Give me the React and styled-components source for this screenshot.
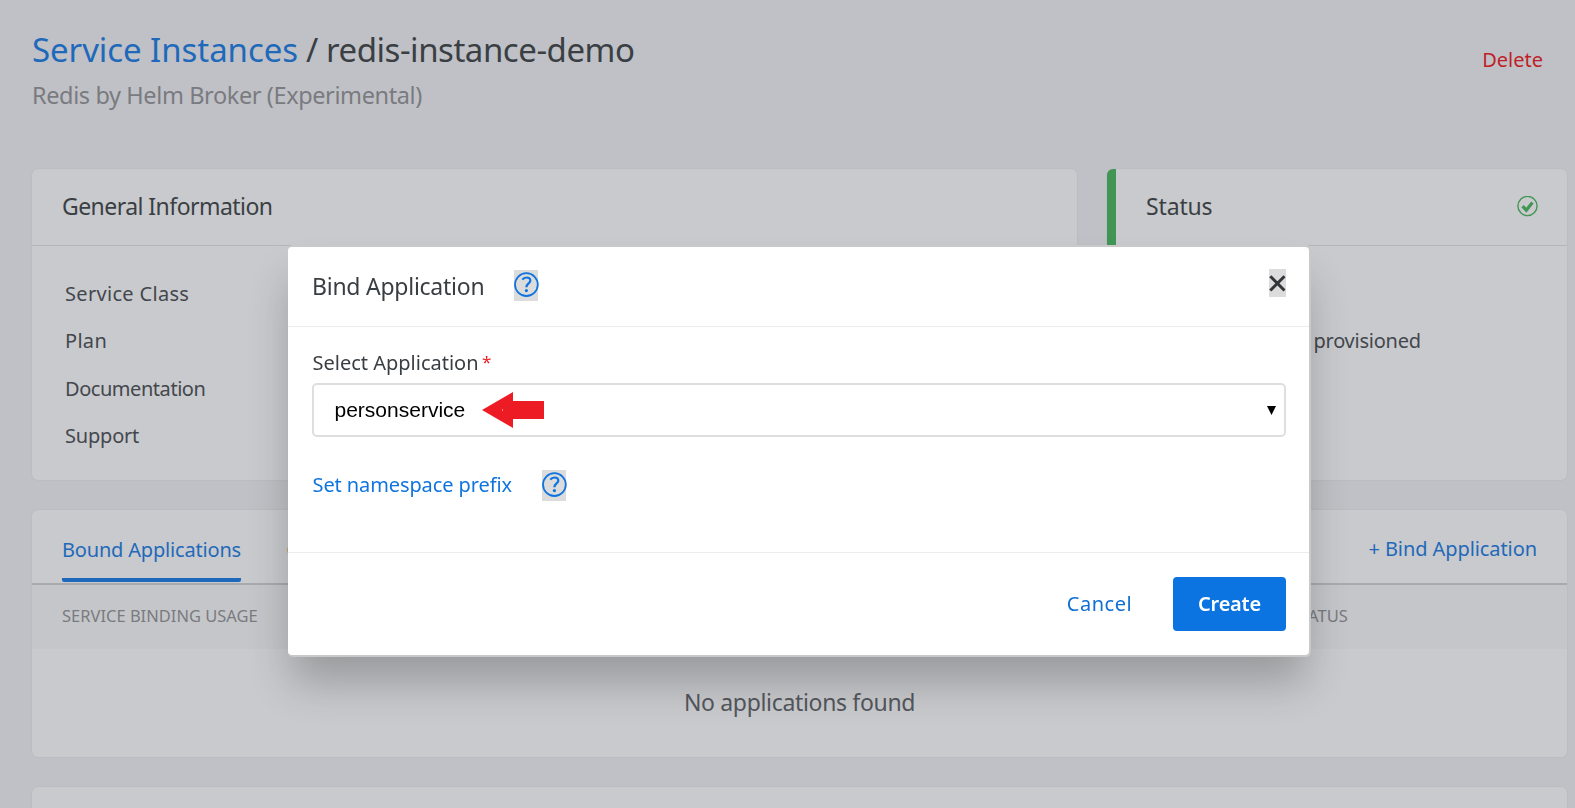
import React from 'react';
import styled, { createGlobalStyle } from 'styled-components';

const GlobalStyle = createGlobalStyle`
  * { box-sizing: border-box; }
  body {
    margin: 0;
    background: #c0c1c6;
    font-family: "Noto Sans", "Open Sans", sans-serif;
    color: #43474d;
  }
`;

const Page = styled.main`
  height: 808px;
  overflow: hidden;
  padding: 0 8px 0 32px;
`;

const Text = styled.span`
  letter-spacing: ${(p) => p.$spacing || 0}px;
  white-space: nowrap;
`;

const PageHeader = styled.header`
  display: flex;
  justify-content: space-between;
  align-items: flex-start;
  height: 169px;
  padding: 28px 24px 0 0;
`;

const Breadcrumb = styled.h1`
  margin: 0;
  font-size: 33px;
  line-height: 44px;
  font-weight: 400;
  color: #3a3f44;
  white-space: pre;
`;

const Crumb = styled.a`
  color: #1f69ba;
  letter-spacing: -0.07px;
`;

const Subtitle = styled.p`
  margin: 6px 0 0;
  font-size: 23.5px;
  line-height: 34px;
  color: #797b80;
`;

const DeleteButton = styled.button`
  margin-top: 18px;
  padding: 0;
  border: 0;
  background: none;
  font: 20px/28px "Noto Sans", sans-serif;
  color: #bf1f26;
`;

const TopGrid = styled.div`
  display: grid;
  grid-template-columns: 1045px 460px;
  gap: 30px;
  margin-bottom: 30px;
`;

const Card = styled.section`
  height: ${(p) => p.$height}px;
  margin-bottom: ${(p) => p.$gap || 0}px;
  border-radius: 6px;
  border-left: ${(p) => (p.$accent ? '9px solid #419656' : '0')};
  background: #c9cacd;
  box-shadow: 0 0 2px rgba(0, 0, 0, 0.08);
`;

const CardHeader = styled.div`
  display: flex;
  align-items: center;
  justify-content: space-between;
  height: 77px;
  padding: 0 29px 2px 30px;
  border-bottom: 1px solid #b5b6ba;
  font-size: 23px;
  line-height: 30px;
  color: #3a3f44;
`;

const CardBody = styled.div`
  display: flex;
  flex-direction: column;
  padding: ${(p) => p.$pad};
`;

const InfoRow = styled.div`
  font-size: 20px;
  line-height: 47.5px;
`;

const TabBar = styled.div`
  display: flex;
  align-items: flex-start;
  height: 75px;
  padding: 0 30px;
  border-bottom: 2px solid #a9aaae;
`;

const Tab = styled.div`
  height: 72px;
  margin-right: 45.5px;
  padding-top: 26px;
  font-size: 20px;
  line-height: 28px;
  color: ${(p) => (p.$active ? '#1f69ba' : '#43474d')};
  background: ${(p) => (p.$active ? 'linear-gradient(#1f69ba, #1f69ba) bottom / 100% 4px no-repeat' : 'none')};
  border-radius: 2px;
`;

const BindButton = styled.button`
  margin: 25px 0 0 auto;
  padding: 0;
  border: 0;
  background: none;
  font: 20px/28px "Noto Sans", sans-serif;
  letter-spacing: -0.08px;
  color: #1f69ba;
`;

const TableHead = styled.div`
  display: grid;
  grid-template-columns: 1229px 1fr;
  align-items: center;
  height: 64px;
  padding: 0 30px 3px;
  background: #c5c6c9;
  font-size: 16.5px;
  line-height: 24px;
  color: #797b80;
`;

const Empty = styled.div`
  padding-top: 38px;
  text-align: center;
  font-size: 23px;
  line-height: 30px;
  color: #53575d;
`;

const Overlay = styled.div`
  position: fixed;
  inset: 0;
  display: flex;
  align-items: flex-start;
  padding: 247px 0 0 288px;
`;

const Dialog = styled.div`
  width: 1021px;
  height: 408px;
  border-radius: 4px;
  background: #fff;
  color: #393e43;
  box-shadow: 1px -1px 0 1px #c8c9c9, 1px 1px 0 1px #c8c9c9, 0 30px 43px -3px rgba(0, 0, 0, 0.24);
`;

const DialogHeader = styled.div`
  display: flex;
  align-items: flex-start;
  height: 80px;
  padding: 22px 23px 0 24px;
  border-bottom: 1px solid #ececec;
`;

const DialogTitle = styled.h2`
  width: 202px;
  margin: 2px 0 0;
  font-size: 23px;
  line-height: 30px;
  font-weight: 400;
`;

const HelpBadge = styled.span`
  display: flex;
  width: 24px;
  height: 31px;
  margin-top: ${(p) => p.$top || 0}px;
  background: #dcdcdc;
  svg { flex: none; overflow: visible; }
`;

const CloseButton = styled.button`
  display: flex;
  width: 17px;
  height: 28px;
  margin-left: auto;
  padding: 0;
  border: 0;
  background: #dcdcdc;
`;

const DialogBody = styled.div`
  height: 226px;
  padding: 22px 23px 0 24px;
  border-bottom: 1px solid #ececec;
  font-size: 20px;
  line-height: 28px;
`;

const Label = styled.label`
  display: flex;
  gap: 3.5px;
  padding-left: 0.5px;
`;

const Required = styled.span`
  color: #ee1c25;
  font-size: 17px;
  line-height: 26px;
`;

const SelectBox = styled.div`
  display: flex;
  align-items: center;
  height: 54px;
  margin-top: 6px;
  padding: 0 8px 0 20.5px;
  border: 2px solid #dedede;
  border-radius: 5px;
  font: 21px/28px "Liberation Sans", sans-serif;
  color: #000;
`;

const ArrowMark = styled.svg`
  margin: 0 0 1px 16.5px;
`;

const Caret = styled.svg`
  margin-left: auto;
`;

const PrefixRow = styled.div`
  display: flex;
  margin-top: 33px;
`;

const PrefixLink = styled.a`
  width: 229.5px;
  padding: 1px 0 0 0.5px;
  color: #0f74df;
`;

const DialogFooter = styled.div`
  display: flex;
  justify-content: flex-end;
  align-items: center;
  height: 102px;
  padding: 0 23px;
`;

const DialogButton = styled.button`
  height: 54px;
  width: ${(p) => p.$width}px;
  padding: 0 0 1px;
  border: 0;
  border-radius: 4px;
  background: ${(p) => (p.$primary ? '#0b74e0' : 'none')};
  color: ${(p) => (p.$primary ? '#fff' : '#0f6fd4')};
  font: ${(p) => (p.$primary ? 600 : 400)} 20px/28px "Noto Sans", sans-serif;
`;

const HelpIcon = () => (
  <svg width="25" height="31" viewBox="0 0 25 31" fill="none" stroke="#0f74df">
    <circle cx="12.4" cy="14.6" r="11.4" strokeWidth="1.8" />
    <path d="M8.3 9.6C9.4 8.2 10.8 7.5 12.4 7.5C14.8 7.5 16.3 8.8 16.3 10.7C16.3 13.4 12.4 13.6 12.4 17.2" strokeWidth="2.2" />
    <circle cx="12.4" cy="20.6" r="1.6" fill="#0f74df" stroke="none" />
  </svg>
);

const CheckIcon = () => (
  <svg width="21" height="21" viewBox="0 0 21 21" fill="none">
    <circle cx="10.5" cy="10" r="9.6" stroke="#419656" strokeWidth="1.4" />
    <path d="M5.6 10.2L9.3 14.2L15.4 6.6" stroke="#419656" strokeWidth="3.2" />
  </svg>
);

export default function App() {
  return (
    <>
      <GlobalStyle />
      <Page>
        <PageHeader>
          <div>
            <Breadcrumb>
              <Crumb>Service Instances</Crumb>
              <Text $spacing={-0.46}> / redis-instance-demo</Text>
            </Breadcrumb>
            <Subtitle><Text $spacing={-0.39}>Redis by Helm Broker (Experimental)</Text></Subtitle>
          </div>
          <DeleteButton>Delete</DeleteButton>
        </PageHeader>

        <TopGrid>
          <Card $height={311}>
            <CardHeader><Text $spacing={-0.55}>General Information</Text></CardHeader>
            <CardBody $pad="23.8px 33px 0">
              <InfoRow><Text $spacing={0.32}>Service Class</Text></InfoRow>
              <InfoRow><Text $spacing={0.3}>Plan</Text></InfoRow>
              <InfoRow><Text $spacing={-0.45}>Documentation</Text></InfoRow>
              <InfoRow><Text $spacing={-0.2}>Support</Text></InfoRow>
            </CardBody>
          </Card>
          <Card $height={311} $accent>
            <CardHeader><Text $spacing={-0.15}>Status</Text><CheckIcon /></CardHeader>
            <CardBody $pad="70.9px 0 0 197.5px">
              <InfoRow><Text $spacing={-0.25}>provisioned</Text></InfoRow>
            </CardBody>
          </Card>
        </TopGrid>

        <Card $height={247} $gap={30}>
          <TabBar>
            <Tab $active><Text $spacing={-0.18}>Bound Applications</Text></Tab>
            <Tab>Credentials</Tab>
            <BindButton>+ Bind Application</BindButton>
          </TabBar>
          <TableHead>
            <span>SERVICE BINDING USAGE</span>
            <span>STATUS</span>
          </TableHead>
          <Empty><Text $spacing={-0.33}>No applications found</Text></Empty>
        </Card>
        <Card $height={60} />
      </Page>

      <Overlay>
        <Dialog role="dialog">
          <DialogHeader>
            <DialogTitle><Text $spacing={-0.25}>Bind Application</Text></DialogTitle>
            <HelpBadge $top={1}><HelpIcon /></HelpBadge>
            <CloseButton aria-label="Close">
              <svg width="17" height="28" viewBox="0 0 17 28">
                <path d="M1.3 7.3L15.5 21.5M15.5 7.3L1.3 21.5" stroke="#32363a" strokeWidth="3" />
              </svg>
            </CloseButton>
          </DialogHeader>
          <DialogBody>
            <Label><Text>Select Application</Text><Required>*</Required></Label>
            <SelectBox>
              personservice
              <ArrowMark width="62" height="36" viewBox="0 0 62 36">
                <path d="M0 18L31 0V9H62V27H31V36Z" fill="#ed1c24" />
                <rect x="20" y="17" width="1" height="2" fill="#f58a8e" />
              </ArrowMark>
              <Caret width="9" height="9" viewBox="0 0 9 9"><path d="M0 0H9L4.5 9Z" /></Caret>
            </SelectBox>
            <PrefixRow>
              <PrefixLink><Text $spacing={-0.1}>Set namespace prefix</Text></PrefixLink>
              <HelpBadge><HelpIcon /></HelpBadge>
            </PrefixRow>
          </DialogBody>
          <DialogFooter>
            <DialogButton $width={147}><Text $spacing={0.5}>Cancel</Text></DialogButton>
            <DialogButton $width={113} $primary><Text $spacing={-0.25}>Create</Text></DialogButton>
          </DialogFooter>
        </Dialog>
      </Overlay>
    </>
  );
}
